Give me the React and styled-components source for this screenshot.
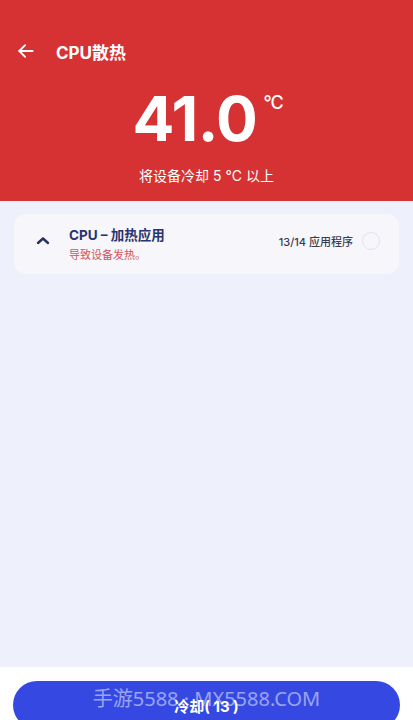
import React from 'react'
import styled, { createGlobalStyle } from 'styled-components'

const GlobalStyle = createGlobalStyle`
  html, body { margin: 0; padding: 0; }
  body {
    font-family: Inter, "Noto Sans CJK SC", sans-serif;
    background: #eef0fb;
  }
`

const Page = styled.div`
  position: relative;
  width: 413px;
  height: 720px;
  display: flex;
  flex-direction: column;
  overflow: hidden;
`

const Header = styled.header`
  background: #d63133;
  height: 201px;
  display: flex;
  flex-direction: column;
  box-sizing: border-box;
  padding-top: 38px;
`

const TopBar = styled.div`
  display: flex;
  align-items: center;
  gap: 20px;
  padding-left: 16px;
  height: 26px;
`

const BackButton = styled.button`
  background: none;
  border: none;
  padding: 0;
  display: flex;
  color: #fff;
`

const Title = styled.h1`
  margin: 0;
  color: #fff;
  font-size: 17px;
  font-weight: 700;
`

const TempRow = styled.div`
  display: flex;
  justify-content: center;
  align-items: flex-start;
  margin-top: 20px;
  padding-left: 2px;
`

const Temp = styled.span`
  color: #fff;
  font-size: 62px;
  font-weight: 700;
  line-height: 70px;
  letter-spacing: -0.5px;
`

const Unit = styled.span`
  color: #fff;
  font-size: 18px;
  font-weight: 500;
  margin-left: 6px;
  margin-top: 8px;
  letter-spacing: -1px;
`

const Subtitle = styled.p`
  margin: 11px 0 0;
  text-align: center;
  color: #fff;
  font-size: 14px;
  font-weight: 400;
`

const Content = styled.main`
  flex: 1;
  padding: 13px 14px;
`

const Card = styled.div`
  background: #f6f6fb;
  border-radius: 12px;
  height: 60px;
  display: flex;
  align-items: center;
  padding: 0 19px 0 22px;
`

const Chevron = styled.span`
  display: flex;
  color: #262f5e;
  margin-right: 19px;
  margin-top: -7px;
`

const CardText = styled.div`
  flex: 1;
  display: flex;
  flex-direction: column;
  gap: 2px;
  margin-top: -2px;
`

const CardTitle = styled.span`
  color: #28336f;
  font-size: 13.5px;
  font-weight: 700;
`

const CardDesc = styled.span`
  color: #d6515a;
  font-size: 11px;
`

const Count = styled.span`
  color: #3a3d52;
  font-size: 11px;
  font-weight: 500;
  margin-right: 9px;
  margin-top: -6px;
`

const Check = styled.span`
  width: 16px;
  height: 16px;
  border-radius: 50%;
  border: 1.5px solid #e0e2f2;
  margin-top: -6px;
`

const Footer = styled.footer`
  background: #fff;
  height: 53px;
  padding: 14px 13px 0;
  box-sizing: border-box;
  position: relative;
`

const CoolButton = styled.button`
  width: 100%;
  height: 48px;
  border: none;
  border-radius: 24px;
  background: #3549e2;
  color: #fff;
  font-family: inherit;
  font-size: 15px;
  font-weight: 700;
  white-space: pre;
`

const Watermark = styled.div`
  position: absolute;
  left: 0;
  right: 0;
  top: 683px;
  text-align: center;
  color: rgba(255, 255, 255, 0.5);
  font-family: "Noto Sans", "Noto Sans CJK SC", sans-serif;
  font-size: 20px;
  pointer-events: none;
`

const App = () => {
  return (
    <Page>
      <GlobalStyle />
      <Header>
        <TopBar>
          <BackButton>
            <svg width="20" height="20" viewBox="0 0 24 24" fill="none" stroke="currentColor" strokeWidth="2.2" strokeLinecap="round" strokeLinejoin="round">
              <path d="M20 12H4" />
              <path d="M11 5l-7 7 7 7" />
            </svg>
          </BackButton>
          <Title>CPU散热</Title>
        </TopBar>
        <TempRow>
          <Temp>41.0</Temp>
          <Unit>°C</Unit>
        </TempRow>
        <Subtitle>将设备冷却 5 °C 以上</Subtitle>
      </Header>
      <Content>
        <Card>
          <Chevron>
            <svg width="14" height="10" viewBox="0 0 14 10" fill="none" stroke="currentColor" strokeWidth="2.4" strokeLinecap="round" strokeLinejoin="round">
              <path d="M2 7l5-4.5L12 7" />
            </svg>
          </Chevron>
          <CardText>
            <CardTitle>CPU – 加热应用</CardTitle>
            <CardDesc>导致设备发热。</CardDesc>
          </CardText>
          <Count>13/14 应用程序</Count>
          <Check />
        </Card>
      </Content>
      <Footer>
        <CoolButton>{'冷却( 13 )'}</CoolButton>
      </Footer>
      <Watermark>手游5588 · MX5588.COM</Watermark>
    </Page>
  )
}

export default App
